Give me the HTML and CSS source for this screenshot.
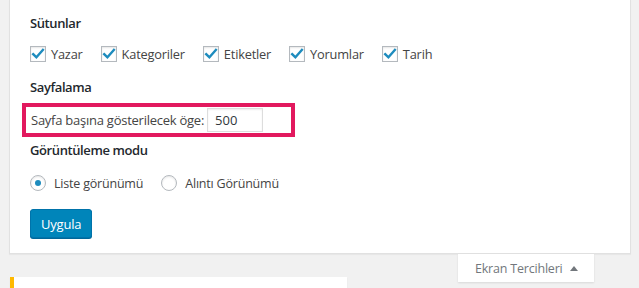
FILE: index.html
```html
<!DOCTYPE html>
<html lang="tr">
<head>
<meta charset="utf-8">
<title>Ekran Tercihleri</title>
<link rel="stylesheet" href="styles.css">
</head>
<body>
<div class="wrap">
  <div class="panel">
    <h5 class="legend">Sütunlar</h5>
    <div class="columns">
      <label class="check"><span class="box"><svg viewBox="0 0 16 16" width="16" height="16"><path d="M3.2 8.2 L6.4 11.3 L12.9 3.9" fill="none" stroke="#1e8cbe" stroke-width="2.4" stroke-linecap="square"/></svg></span>Yazar</label>
      <label class="check"><span class="box"><svg viewBox="0 0 16 16" width="16" height="16"><path d="M3.2 8.2 L6.4 11.3 L12.9 3.9" fill="none" stroke="#1e8cbe" stroke-width="2.4" stroke-linecap="square"/></svg></span>Kategoriler</label>
      <label class="check"><span class="box"><svg viewBox="0 0 16 16" width="16" height="16"><path d="M3.2 8.2 L6.4 11.3 L12.9 3.9" fill="none" stroke="#1e8cbe" stroke-width="2.4" stroke-linecap="square"/></svg></span>Etiketler</label>
      <label class="check"><span class="box"><svg viewBox="0 0 16 16" width="16" height="16"><path d="M3.2 8.2 L6.4 11.3 L12.9 3.9" fill="none" stroke="#1e8cbe" stroke-width="2.4" stroke-linecap="square"/></svg></span>Yorumlar</label>
      <label class="check"><span class="box"><svg viewBox="0 0 16 16" width="16" height="16"><path d="M3.2 8.2 L6.4 11.3 L12.9 3.9" fill="none" stroke="#1e8cbe" stroke-width="2.4" stroke-linecap="square"/></svg></span>Tarih</label>
    </div>
    <h5 class="legend legend-gap">Sayfalama</h5>
    <div class="highlight">
      <span class="per-page-label">Sayfa başına gösterilecek öge:</span>
      <span class="num-input">500</span>
    </div>
    <h5 class="legend legend-mode">Görüntüleme modu</h5>
    <div class="modes">
      <label class="radio"><span class="circle checked"></span>Liste görünümü</label>
      <label class="radio"><span class="circle"></span>Alıntı Görünümü</label>
    </div>
    <button class="apply">Uygula</button>
  </div>
  <div class="below">
    <div class="notice"></div>
    <div class="screen-tab">Ekran Tercihleri <span class="arrow"></span></div>
  </div>
</div>
</body>
</html>
```
FILE: styles.css
```css
html, body {
  margin: 0;
  padding: 0;
  background: #f1f1f1;
  height: 100%;
  overflow: hidden;
}
body {
  font-family: "Open Sans", "Noto Sans", sans-serif;
  font-size: 13px;
  color: #444;
}
.wrap {
  margin: 0 8px 0 9px;
}
.panel {
  background: #fff;
  border: 1px solid #e1e1e1;
  border-top: none;
  box-shadow: 0 1px 1px rgba(0,0,0,.04);
  padding: 13px 20px 15px 20px;
}
.legend {
  margin: 0;
  font-size: 13px;
  line-height: 20px;
  font-weight: 600;
  color: #23282d;
  letter-spacing: -0.4px;
}
.columns {
  display: flex;
  align-items: center;
  height: 20px;
  margin-top: 11px;
  gap: 18px;
}
.check, .radio {
  display: flex;
  align-items: center;
  gap: 5px;
  font-size: 12.5px;
  letter-spacing: -0.2px;
  color: #444;
}
.check {
  font-size: 12.8px;
}
.box {
  width: 16px;
  height: 16px;
  box-sizing: border-box;
  border: 1px solid #b4b9be;
  box-shadow: inset 0 1px 2px rgba(0,0,0,.1);
  display: flex;
  align-items: center;
  justify-content: center;
}
.box svg {
  display: block;
  flex: none;
}
.legend-gap {
  margin-top: 13px;
}
.highlight {
  display: flex;
  align-items: center;
  width: 260px;
  height: 26px;
  margin: 6px 0 0 -8px;
  border: 4px solid #e2195e;
  padding-left: 5px;
  box-sizing: content-box;
}
.per-page-label {
  font-size: 13px;
  letter-spacing: -0.25px;
  color: #444;
}
.num-input {
  margin-left: 3px;
  width: 56px;
  height: 24px;
  box-sizing: border-box;
  border: 1px solid #ddd;
  box-shadow: inset 0 1px 2px rgba(0,0,0,.07);
  padding: 0 7px;
  line-height: 22px;
  font-size: 13px;
  color: #32373c;
}
.legend-mode {
  margin-top: 3px;
}
.modes {
  display: flex;
  align-items: center;
  height: 20px;
  margin-top: 13px;
  gap: 18px;
}
.radio {
  gap: 8px;
}
.circle {
  width: 16px;
  height: 16px;
  box-sizing: border-box;
  border: 1px solid #b4b9be;
  border-radius: 50%;
  box-shadow: inset 0 1px 2px rgba(0,0,0,.1);
  display: flex;
  align-items: center;
  justify-content: center;
}
.circle.checked::after {
  content: "";
  width: 6px;
  height: 6px;
  border-radius: 50%;
  background: #1e8cbe;
}
.apply {
  display: block;
  margin-top: 16px;
  height: 29px;
  padding: 0 10px;
  background: #0085ba;
  border: 1px solid #0073aa;
  border-radius: 3px;
  box-shadow: 0 1px 0 #006799;
  color: #fff;
  font-family: inherit;
  font-size: 13px;
  letter-spacing: -0.2px;
}
.below {
  display: flex;
  align-items: flex-start;
}
.notice {
  margin: 23px 0 0 1px;
  width: 333px;
  height: 30px;
  background: #fff;
  border-left: 4px solid #ffb900;
  box-shadow: 0 1px 1px rgba(0,0,0,.08);
}
.screen-tab {
  margin-left: auto;
  margin-right: 37px;
  height: 28px;
  width: 136px;
  box-sizing: border-box;
  padding-left: 17px;
  display: flex;
  align-items: center;
  gap: 7px;
  background: #fff;
  box-shadow: 0 1px 2px rgba(0,0,0,.1);
  color: #72777c;
  font-size: 12.5px;
  letter-spacing: -0.2px;
}
.arrow {
  width: 0;
  height: 0;
  border-left: 4px solid transparent;
  border-right: 4px solid transparent;
  border-bottom: 5px solid #72777c;
}
```
